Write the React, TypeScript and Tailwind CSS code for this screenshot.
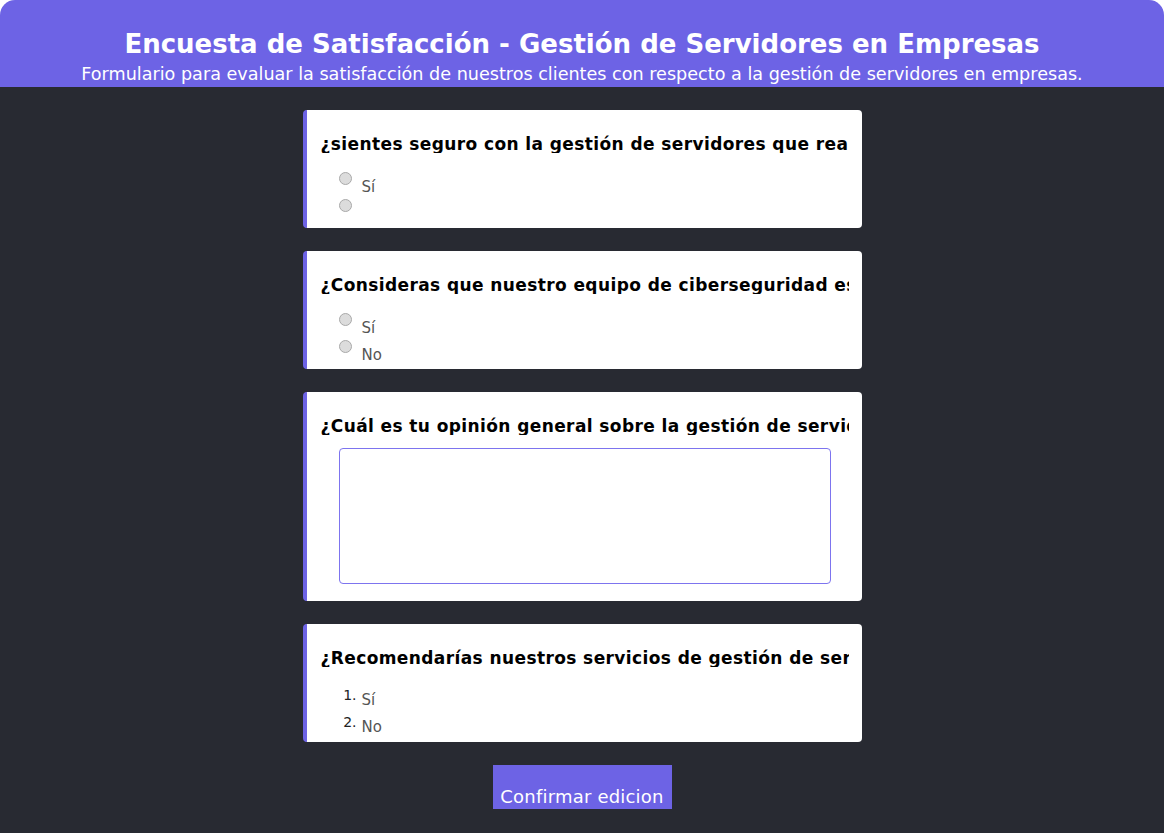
import React from 'react';

const font = { fontFamily: '"DejaVu Sans", "Noto Sans", sans-serif' };

function Radio() {
    return (
        <span className="inline-block w-[13px] h-[13px] rounded-full border border-[#a9a9a9] bg-[#dcdcdc] ml-[18px] shrink-0" />
    );
}

function RadioRow({ label }: { label?: string }) {
    return (
        <div className="flex items-start h-[27px]">
            <Radio />
            <span className="ml-[10px] mt-[5px] text-[15px] leading-[20px] text-[#555]">{label}</span>
        </div>
    );
}

function Card({ title, children, bottom }: { title: string; children: React.ReactNode; bottom: string }) {
    return (
        <div className={`w-[559px] bg-white rounded-[4px] border-l-[4px] border-[#6d63e5] pl-[14px] pr-[13px] pt-[24px] ${bottom}`}>
            <div className="h-[19px] leading-[20px] overflow-hidden whitespace-nowrap text-[17px] tracking-[0.4px] font-bold text-black">
                {title}
            </div>
            {children}
        </div>
    );
}

export default function App() {
    return (
        <div className="w-[1164px] h-[833px] bg-white overflow-hidden" style={font}>
            <header className="h-[87px] bg-[#6d63e5] rounded-t-[15px] flex flex-col items-center pt-[28px] text-white">
                <h1 className="text-[26px] leading-[32px] font-bold">Encuesta de Satisfacción - Gestión de Servidores en Empresas</h1>
                <p className="text-[17.6px] leading-[20px] mt-[4px]">Formulario para evaluar la satisfacción de nuestros clientes con respecto a la gestión de servidores en empresas.</p>
            </header>
            <main className="h-[746px] bg-[#282a32] flex flex-col items-center pt-[23px] gap-[23px]">
                <Card title="¿sientes seguro con la gestión de servidores que realizamos en tu empresa?" bottom="pb-[2px]">
                    <div className="mt-[19px]">
                        <RadioRow label="Sí" />
                        <RadioRow />
                    </div>
                </Card>
                <Card title="¿Consideras que nuestro equipo de ciberseguridad es competente?" bottom="pb-[2px]">
                    <div className="mt-[19px]">
                        <RadioRow label="Sí" />
                        <RadioRow label="No" />
                    </div>
                </Card>
                <Card title="¿Cuál es tu opinión general sobre la gestión de servidores en tu empresa?" bottom="pb-[17px]">
                    <textarea className="block mt-[13px] ml-[18px] w-[492px] h-[136px] border border-[#7d74ef] rounded-[4px] resize-none outline-none" />
                </Card>
                <Card title="¿Recomendarías nuestros servicios de gestión de servidores a otras empresas?" bottom="pb-[2px]">
                    <ol className="mt-[19px]">
                        {['Sí', 'No'].map((t, i) => (
                            <li key={t} className="flex items-start h-[27px]">
                                <span className="w-[36px] text-right text-[14px] leading-[18px] text-[#222]">{i + 1}.</span>
                                <span className="ml-[5px] mt-[4px] text-[15px] leading-[20px] text-[#555]">{t}</span>
                            </li>
                        ))}
                    </ol>
                </Card>
                <button className="w-[179px] h-[44px] bg-[#6d63e5] text-white text-[18px] tracking-[0.2px] leading-[20px] flex items-end justify-center pb-[2px]">
                    Confirmar edicion
                </button>
            </main>
        </div>
    );
}
